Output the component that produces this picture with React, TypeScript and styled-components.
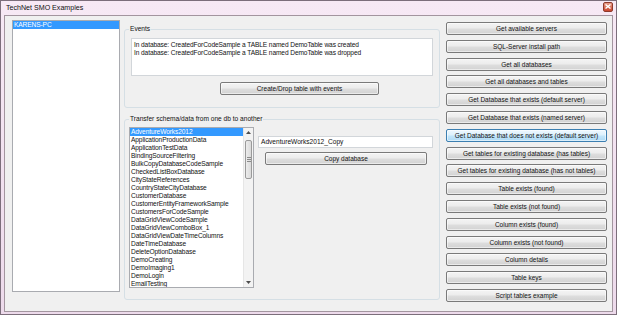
import React from "react";
import styled, { createGlobalStyle, css } from "styled-components";

const GlobalStyle = createGlobalStyle`
  html, body { margin: 0; padding: 0; background: #ffffff; }
  body { font-family: "Liberation Sans", Arial, sans-serif; color: #000; }
`;

const servers = ["KARENS-PC"];

const databases = [
  "AdventureWorks2012",
  "ApplicationProductionData",
  "ApplicationTestData",
  "BindingSourceFiltering",
  "BulkCopyDatabaseCodeSample",
  "CheckedListBoxDatabase",
  "CityStateReferences",
  "CountryStateCityDatabase",
  "CustomerDatabase",
  "CustomerEntityFrameworkSample",
  "CustomersForCodeSample",
  "DataGridViewCodeSample",
  "DataGridViewComboBox_1",
  "DataGridViewDateTimeColumns",
  "DateTimeDatabase",
  "DeleteOptionDatabase",
  "DemoCreating",
  "DemoImaging1",
  "DemoLogin",
  "EmailTesting",
];

const actions = [
  "Get available servers",
  "SQL-Server install path",
  "Get all databases",
  "Get all databases and tables",
  "Get Database that exists (default server)",
  "Get Database that exists (named server)",
  "Get Database that does not exists (default server)",
  "Get tables for existing database (has tables)",
  "Get tables for existing database (has not tables)",
  "Table exists (found)",
  "Table exists (not found)",
  "Column exists (found)",
  "Column exists (not found)",
  "Column details",
  "Table keys",
  "Script tables example",
];

const events = [
  "In database: CreatedForCodeSample a TABLE named DemoTable was created",
  "In database: CreatedForCodeSample a TABLE named DemoTable was dropped",
];

export default function App() {
  return (
    <>
      <GlobalStyle />
      <Window>
        <TitleBar>
          <Title>TechNet SMO Examples</Title>
          <CloseButton>
            <svg width="6" height="5" viewBox="0 0 6 5">
              <path d="M0.5 0.5 L5.5 4.5 M5.5 0.5 L0.5 4.5" stroke="#fff" strokeWidth="1.4" />
            </svg>
          </CloseButton>
        </TitleBar>
        <Client>
          <ServerList>
            {servers.map((s, i) => (
              <Item key={s} $selected={i === 0}>{s}</Item>
            ))}
          </ServerList>

          <Middle>
            <Group $pb={12}>
              <Legend>Events</Legend>
              <EventsBox>
                {events.map((e) => (
                  <EventLine key={e}>{e}</EventLine>
                ))}
              </EventsBox>
              <Button $w={159} style={{ marginLeft: 91, marginTop: 6 }}>
                Create/Drop table with events
              </Button>
            </Group>

            <Group $pb={11} $mt={7}>
              <Legend>Transfer schema/data from one db to another</Legend>
              <TransferRow>
                <DbList>
                  <DbItems>
                    {databases.map((d, i) => (
                      <Item key={d} $selected={i === 0}>{d}</Item>
                    ))}
                  </DbItems>
                  <ScrollBar>
                    <Arrow>
                      <svg width="5" height="3" viewBox="0 0 5 3"><path d="M0 3 L2.5 0 L5 3 Z" fill="#4d4d4d" /></svg>
                    </Arrow>
                    <Track>
                      <Thumb>
                        <Grip />
                      </Thumb>
                    </Track>
                    <Arrow>
                      <svg width="5" height="3" viewBox="0 0 5 3"><path d="M0 0 L2.5 3 L5 0 Z" fill="#4d4d4d" /></svg>
                    </Arrow>
                  </ScrollBar>
                </DbList>
                <CopyPane>
                  <TextBox>AdventureWorks2012_Copy</TextBox>
                  <Button $w={162} style={{ marginLeft: 7 }}>Copy database</Button>
                </CopyPane>
              </TransferRow>
            </Group>
          </Middle>

          <Actions>
            {actions.map((a, i) => (
              <Button key={a} $w={161} $hot={i === 6}>{a}</Button>
            ))}
          </Actions>
        </Client>
      </Window>
    </>
  );
}

const Window = styled.div`
  width: 617px;
  height: 315px;
  box-sizing: border-box;
  border: 1px solid #7c6e7b;
  background: linear-gradient(#f7e9f5, #eddaeb);
  padding: 0 3px 2px;
  display: flex;
  flex-direction: column;
`;

const TitleBar = styled.div`
  height: 14px;
  display: flex;
  align-items: center;
  justify-content: space-between;
`;

const Title = styled.div`
  font-size: 7.1px;
  line-height: 9px;
  padding-left: 2px;
  color: #111;
`;

const CloseButton = styled.div`
  width: 10px;
  height: 10px;
  margin-top: -3px;
  box-sizing: border-box;
  border: 1px solid #8e3a2c;
  border-radius: 2px;
  background: linear-gradient(#e89a86, #c9452e);
  display: flex;
  align-items: center;
  justify-content: center;
`;

const Client = styled.div`
  flex: 1;
  border: 1px solid #a3959f;
  background: #f0f0f0;
  display: flex;
  align-items: flex-start;
  padding: 4px 0 0 7px;
`;

const ListBase = styled.div`
  box-sizing: border-box;
  background: #fff;
  border: 1px solid #a9abb0;
`;

const ServerList = styled(ListBase)`
  width: 108px;
  height: 272px;
`;

const Item = styled.div<{ $selected?: boolean }>`
  height: 8px;
  font-size: 6.6px;
  line-height: 8px;
  padding-left: 1px;
  white-space: nowrap;
  letter-spacing: -0.1px;
  color: #111;
  ${(p) =>
    p.$selected &&
    css`
      background: #3399ff;
      color: #fff;
    `}
`;

const Middle = styled.div`
  width: 316px;
  margin-left: 4px;
  margin-top: 5px;
  display: flex;
  flex-direction: column;
`;

const Group = styled.fieldset<{ $pb: number; $mt?: number }>`
  margin: ${(p) => p.$mt ?? 0}px 0 0;
  padding: 0 0 ${(p) => p.$pb}px 4px;
  border: 1px solid #d5dfe5;
  border-radius: 3px;
  display: flex;
  flex-direction: column;
  align-items: flex-start;
`;

const Legend = styled.legend`
  font-size: 6.6px;
  line-height: 8px;
  padding: 0 1px;
  color: #111;
`;

const EventsBox = styled.div`
  width: 302px;
  height: 38px;
  box-sizing: border-box;
  margin: 5px 0 0 2px;
  background: #fff;
  border: 1px solid #d2d6da;
  padding: 2px 0 0 2px;
`;

const EventLine = styled.div`
  font-size: 6.6px;
  line-height: 8px;
  white-space: nowrap;
  letter-spacing: -0.1px;
  color: #111;
`;

const Button = styled.div<{ $w: number; $hot?: boolean }>`
  width: ${(p) => p.$w}px;
  height: 13px;
  box-sizing: border-box;
  flex-shrink: 0;
  border: 1px solid #7a7a7a;
  border-radius: 2px;
  background: linear-gradient(#f4f4f4 0%, #ececec 48%, #dedede 52%, #d2d2d2 100%);
  box-shadow: inset 0 0 0 1px rgba(255, 255, 255, 0.55);
  font-size: 6.5px;
  line-height: 11px;
  text-align: center;
  white-space: nowrap;
  color: #111;
  ${(p) =>
    p.$hot &&
    css`
      border-color: #3c7fb1;
      background: linear-gradient(#eef8fe 0%, #dcf1fd 48%, #c3e6fb 52%, #aedaf4 100%);
    `}
`;

const TransferRow = styled.div`
  display: flex;
  align-items: flex-start;
  margin-top: 4px;
`;

const DbList = styled(ListBase)`
  width: 125px;
  height: 161px;
  display: flex;
`;

const DbItems = styled.div`
  flex: 1;
  overflow: hidden;
`;

const ScrollBar = styled.div`
  width: 9px;
  display: flex;
  flex-direction: column;
  background: #f3f3f3;
  border-left: 1px solid #e6e6e6;
`;

const Arrow = styled.div`
  height: 9px;
  display: flex;
  align-items: center;
  justify-content: center;
`;

const Track = styled.div`
  flex: 1;
  padding-top: 3px;
`;

const Thumb = styled.div`
  height: 39px;
  box-sizing: border-box;
  margin: 0 1px;
  border: 1px solid #9a9a9a;
  border-radius: 2px;
  background: linear-gradient(90deg, #ececec, #dadada);
  display: flex;
  align-items: center;
  justify-content: center;
`;

const Grip = styled.div`
  width: 4px;
  height: 5px;
  background: repeating-linear-gradient(#8a8a8a 0 1px, transparent 1px 2px);
`;

const CopyPane = styled.div`
  display: flex;
  flex-direction: column;
  align-items: flex-start;
  margin: 9px 0 0 4px;
  gap: 4px;
`;

const TextBox = styled.div`
  width: 175px;
  height: 12px;
  box-sizing: border-box;
  background: #fff;
  border: 1px solid #d2d6da;
  font-size: 6.6px;
  line-height: 10px;
  padding-left: 2px;
  white-space: nowrap;
  color: #111;
`;

const Actions = styled.div`
  width: 161px;
  margin-left: 6px;
  padding-top: 2px;
  display: flex;
  flex-direction: column;
  gap: 4.8px;
`;
